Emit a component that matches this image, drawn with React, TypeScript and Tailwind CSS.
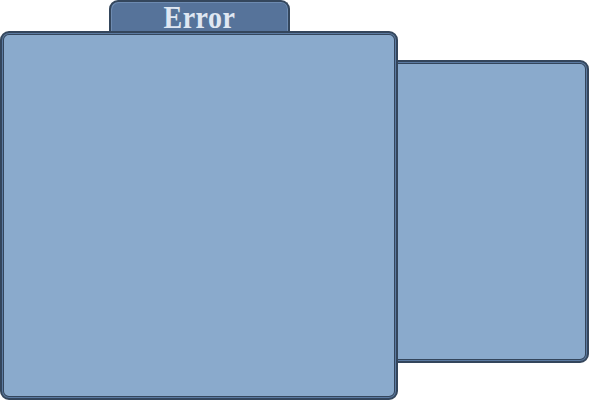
import React from "react";

export default function App() {
  const panel =
    "bg-[#8aaacc] border-2 border-[#34465c] shadow-[inset_0_0_0_1px_#5b7aa1,inset_0_0_0_2px_#34465c]";
  return (
    <div className="w-[590px] h-[401px] bg-white flex flex-col overflow-hidden">
      <div className="flex h-[31px] pl-[109px] shrink-0">
        <div className="w-[181px] h-[33px] rounded-t-[9px] border-2 border-b-0 border-[#34465c] bg-[#56739a] shadow-[inset_1px_1px_0_0_#6d8ab0,inset_-1px_0_0_0_#6d8ab0] flex items-start justify-center relative z-0 overflow-visible">
          <span
            className="block text-[28px] leading-[30px] font-bold text-[#dfe7f2] mt-[1px] scale-y-[1.12] tracking-[0.5px]"
            style={{ fontFamily: '"Liberation Serif", "DejaVu Serif", serif' }}
          >
            Error
          </span>
        </div>
      </div>
      <div className="flex">
        <div className={`relative z-10 w-[398px] h-[369px] rounded-[9px] ${panel}`} />
        <div className={`-ml-[4px] mt-[29px] w-[195px] h-[303px] rounded-r-[9px] ${panel}`} />
      </div>
    </div>
  );
}
